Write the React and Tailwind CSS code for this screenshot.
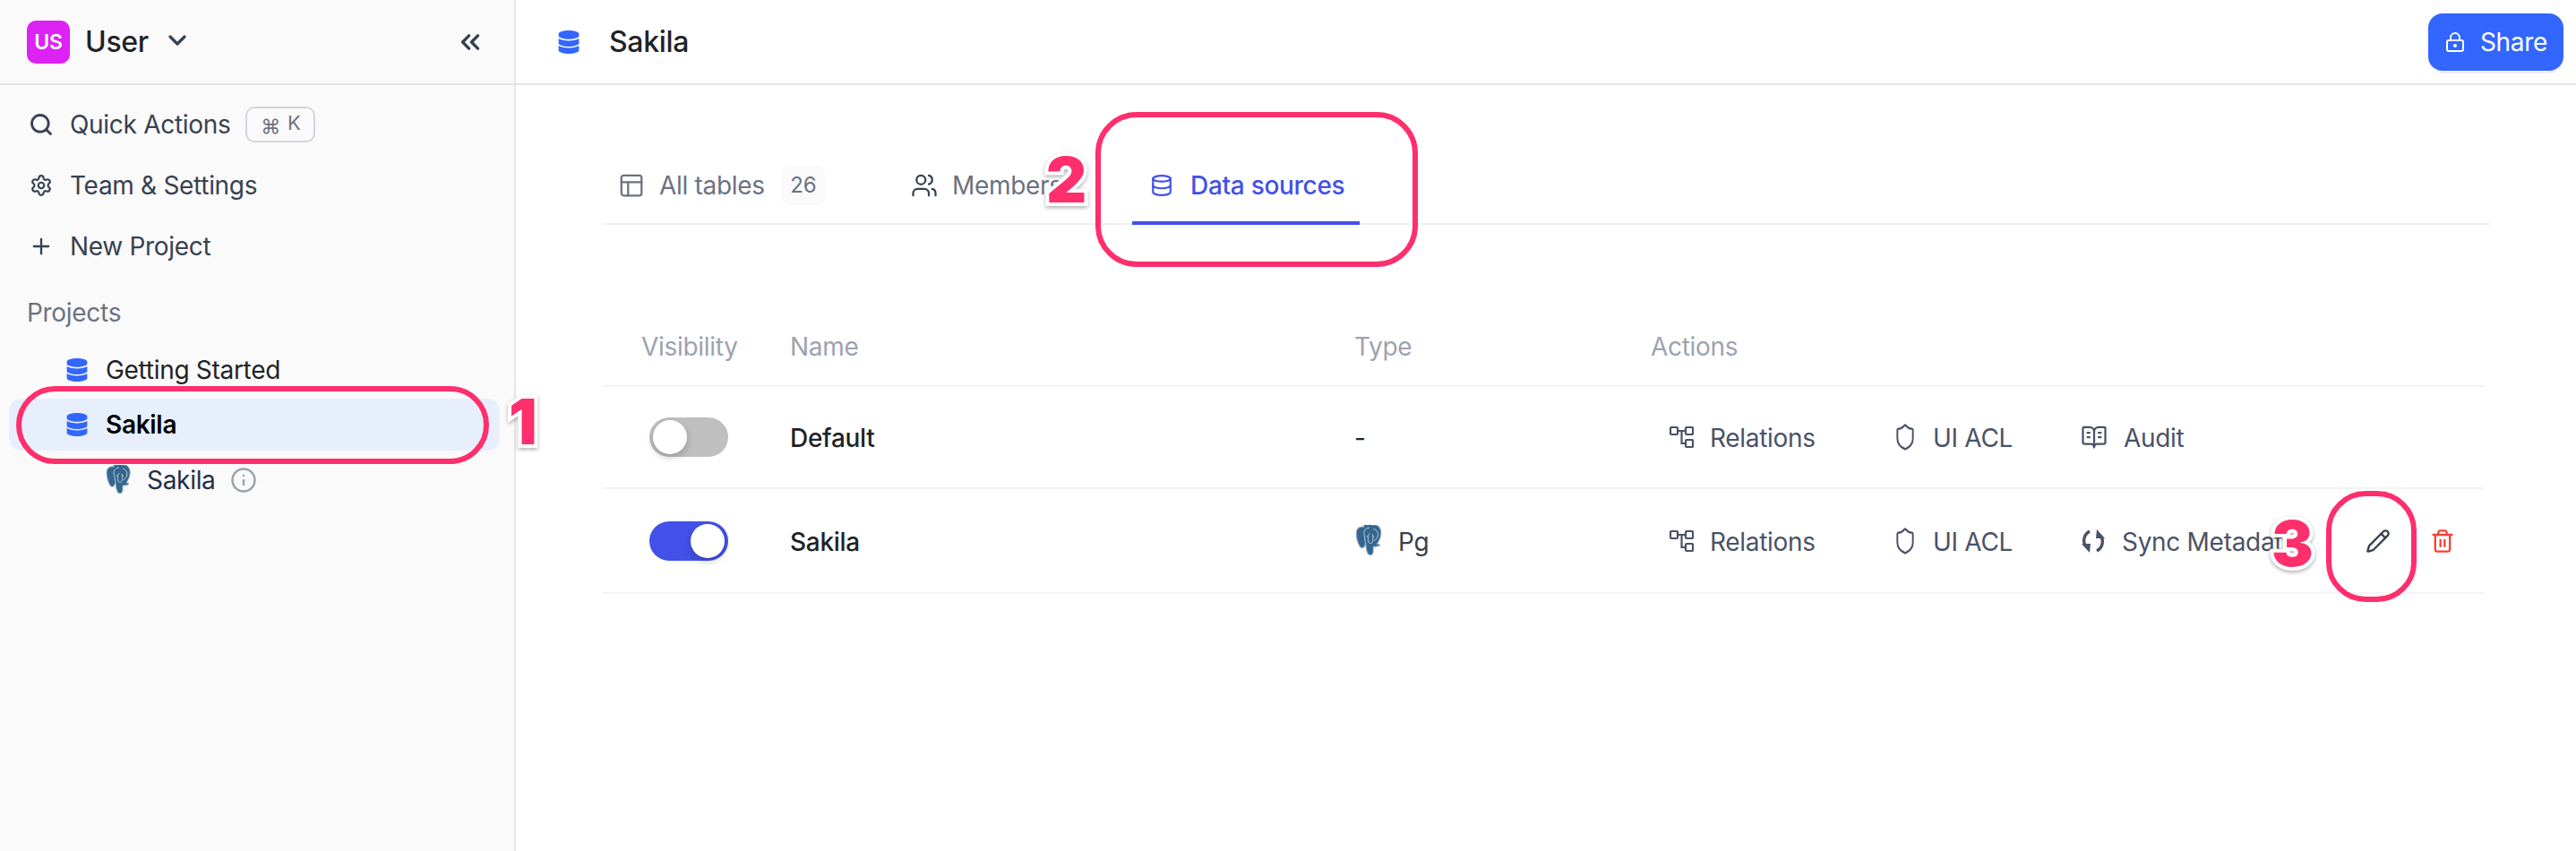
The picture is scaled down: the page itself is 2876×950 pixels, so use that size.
import React from "react";
import {
  Search,
  Settings,
  Plus,
  ChevronDown,
  ChevronsLeft,
  Info,
  PanelsTopLeft,
  Users,
  Database,
  Shield,
  BookOpenText,
  Pencil,
  Trash2,
  LockKeyhole,
} from "lucide-react";
import { FaDatabase } from "react-icons/fa";

const RelationsIcon = () => (
  <svg viewBox="0 0 28 28" className="w-[28px] h-[28px] text-[#4a5268]" fill="none" stroke="currentColor" strokeWidth="2.2">
    <rect x="2" y="3" width="8" height="8" rx="1" />
    <rect x="19" y="3" width="8" height="8" rx="1" />
    <rect x="19" y="17" width="8" height="8" rx="1" />
    <path d="M10 7h9M14.5 7v14H19" />
  </svg>
);

const SyncIcon = () => (
  <svg viewBox="0 0 28 28" className="w-[28px] h-[28px] text-[#4a5268]" fill="none">
    <path d="M10 3C3 7 2 15 6 20" stroke="currentColor" strokeWidth="3.4" />
    <path d="M1 17l10 0-1 10z" fill="currentColor" />
    <path d="M18 25c7-4 8-12 4-17" stroke="currentColor" strokeWidth="3.4" />
    <path d="M27 11l-10 0 1-10z" fill="currentColor" />
  </svg>
);

// postgres elephant, filled body with thin light lines
const PgIcon = ({ className }) => (
  <svg viewBox="0 0 32 34" className={className}>
    <path
      d="M10 2C5 1 2 4 2 9c0 5 2 11 4 14 1 2 4 2 5-1l1-2c0 3 1 8 2 10 2 3 6 2 6-2v-5c2 0 6 0 7-2 0-1-2-1-3-1 2-3 5-8 4-14-1-5-5-7-9-6-2-1-4-1-5 0-2-1-3-1-4 0z"
      fill="#336791"
      stroke="#a9b6c2"
      strokeWidth="1"
    />
    <path
      d="M12 20c-1-4-1-8-2-11 0-3 2-6 6-6M16 9c-2 2-2 6-1 9 1 2 3 2 4 0 1-2 1-6 0-8M20 4c3 1 5 3 5 6 0 3-2 5-4 7M13 12h1M20 12h1"
      fill="none"
      stroke="#c3ced8"
      strokeWidth="0.9"
    />
  </svg>
);

const Toggle = ({ on }) => (
  <div className={`w-[88px] h-[44px] rounded-full flex items-center px-[4px] ${on ? "bg-[#4351e8] justify-end" : "bg-[#bfbfbf] justify-start"}`}>
    <div className="w-[38px] h-[38px] rounded-full bg-white shadow-[0_4px_8px_rgba(0,0,0,0.2)]" />
  </div>
);

const ActionItem = ({ icon, label, width }) => (
  <div className={`flex items-center gap-[18px] shrink-0 ${width}`}>
    {icon}
    <span className="pt-[2px] text-[#4a5268]">{label}</span>
  </div>
);

const ShieldIcon = () => (
  <Shield preserveAspectRatio="none" className="w-[26px] h-[32px] text-[#4a5268]" strokeWidth={1.8} />
);

const Marker = ({ children, className }) => (
  <span className={`absolute font-['Inter',sans-serif] font-black text-[70px] leading-none text-[#ff2e6d] [-webkit-text-stroke:8px_white] [paint-order:stroke_fill] drop-shadow-[0_2px_2px_rgba(0,0,0,0.3)] ${className}`}>
    {children}
  </span>
);

const SideLink = ({ icon, children }) => (
  <div className="h-[68px] flex items-center pl-[32px] gap-[18px] text-[#374151]">
    <span className="w-[28px] flex justify-center">{icon}</span>
    <span>{children}</span>
  </div>
);

export default function App() {
  return (
    <div className="relative w-[2876px] h-[950px] flex bg-white overflow-hidden font-['Inter',sans-serif] text-[28px] leading-[40px] tracking-[-0.3px]">
      {/* sidebar */}
      <aside className="w-[576px] shrink-0 bg-[#fafafa] border-r-2 border-[#e5e5e5] flex flex-col">
        <div className="h-[95px] shrink-0 border-b-2 border-[#e5e5e5] flex items-center pl-[30px] pr-[32px]">
          <div className="w-[48px] h-[48px] rounded-[10px] bg-[#dd22f5] text-white text-[23px] font-semibold flex items-center justify-center">US</div>
          <span className="ml-[17px] text-[32px] font-medium text-[#1f2328]">User</span>
          <ChevronDown className="ml-[16px] -mt-[3px] w-[32px] h-[32px] text-[#374151]" strokeWidth={2.4} />
          <ChevronsLeft className="ml-auto w-[34px] h-[34px] text-[#374151]" strokeWidth={2.4} />
        </div>

        <div className="pt-[10px]">
          <SideLink icon={<Search className="w-[28px] h-[28px]" strokeWidth={2.4} />}>
            <span className="flex items-center gap-[17px]">
              Quick Actions
              <span className="w-[78px] h-[40px] rounded-[10px] border-2 border-[#d4d6dc] flex justify-center gap-[8px] text-[#6b7280] text-[22px] leading-[32px]">
                <span className="pt-[4px]">⌘</span>
                <span>K</span>
              </span>
            </span>
          </SideLink>
          <SideLink icon={<Settings className="w-[26px] h-[26px]" />}>Team &amp; Settings</SideLink>
          <SideLink icon={<Plus className="w-[28px] h-[28px]" />}>New Project</SideLink>
        </div>

        <div className="pl-[30px] pt-[20px] text-[#6b7280]">Projects</div>

        <div className="pt-[15px] pl-[10px] pr-[16px]">
          <div className="h-[58px] flex items-center pl-[64px] gap-[20px] text-[#1f2328]">
            <FaDatabase className="w-[24px] h-[26px] text-[#3366ff]" />
            <span>Getting Started</span>
          </div>
          <div className="mt-[3px] h-[58px] rounded-[14px] bg-[#e8effc] flex items-center pl-[64px] gap-[20px] text-black font-semibold">
            <FaDatabase className="w-[24px] h-[26px] text-[#3366ff]" />
            <span>Sakila</span>
          </div>
          <div className="mt-[13px] h-[40px] flex items-center pl-[107px] text-[#1f2f4a]">
            <PgIcon className="w-[32px] h-[34px]" />
            <span className="ml-[15px]">Sakila</span>
            <Info className="ml-[16px] w-[30px] h-[30px] text-[#9ca3af]" />
          </div>
        </div>
      </aside>

      {/* main */}
      <main className="flex-1 flex flex-col">
        <header className="h-[95px] shrink-0 border-b-2 border-[#e5e5e5] flex items-center pl-[46px] pr-[14px]">
          <FaDatabase className="w-[26px] h-[26px] text-[#3366ff]" />
          <span className="ml-[32px] text-[32px] font-medium text-[#1f2328]">Sakila</span>
          <button className="ml-auto w-[151px] h-[64px] rounded-[16px] bg-[#3366ff] text-white shadow-[0_3px_0_#f0f1f5] flex items-center justify-center gap-[16px]">
            <LockKeyhole className="w-[24px] h-[26px]" strokeWidth={2} />
            Share
          </button>
        </header>

        <div className="pl-[96px] pr-[102px] pt-[70px]">
          {/* tabs */}
          <div className="-mr-[6px] h-[86px] border-b-2 border-[#f0f0f0] flex text-[#6b7280]">
            <div className="flex items-start pt-[22px] pl-[18px] w-[345px]">
              <PanelsTopLeft className="mt-[5px] w-[30px] h-[30px]" strokeWidth={1.8} />
              <span className="ml-[16px]">All tables</span>
              <span className="ml-[18px] -mt-[2px] w-[50px] h-[44px] rounded-[10px] bg-[#fafafa] text-[24px] flex items-center justify-center">26</span>
            </div>
            <div className="flex items-start pt-[22px] w-[247px]">
              <Users className="mt-[5px] w-[30px] h-[30px] text-[#374151]" strokeWidth={1.8} />
              <span className="ml-[16px]">Members</span>
            </div>
            <div className="h-[86px] w-[254px] border-b-4 border-[#4351e8] flex items-start pt-[22px] pl-[20px] text-[#4351e8] font-medium">
              <Database className="mt-[6px] w-[26px] h-[28px]" strokeWidth={2} />
              <span className="ml-[19px]">Data sources</span>
            </div>
          </div>

          {/* table */}
          <div className="mt-[116px] text-[#1f2328]">
            <div className="h-[65px] grid grid-cols-[210px_630px_331px_1fr] items-start border-b-2 border-[#f4f4f5] text-[#9ca3af]">
              <span className="pl-[44px]">Visibility</span>
              <span>Name</span>
              <span>Type</span>
              <span>Actions</span>
            </div>

            <div className="h-[114px] grid grid-cols-[210px_630px_331px_1fr] items-center border-b-2 border-[#f4f4f5]">
              <div className="pl-[53px]"><Toggle /></div>
              <span className="pt-[2px] font-medium">Default</span>
              <span className="pt-[2px]">-</span>
              <div className="flex items-center pl-[20px]">
                <ActionItem icon={<RelationsIcon />} label="Relations" width="w-[251px]" />
                <ActionItem icon={<ShieldIcon />} label="UI ACL" width="w-[209px]" />
                <ActionItem icon={<BookOpenText className="w-[30px] h-[30px] text-[#4a5268]" strokeWidth={1.8} />} label="Audit" width="w-[200px]" />
              </div>
            </div>

            <div className="h-[117px] grid grid-cols-[210px_630px_331px_1fr] items-center border-b-2 border-[#f4f4f5]">
              <div className="pl-[53px]"><Toggle on /></div>
              <span className="pt-[2px] font-medium">Sakila</span>
              <span className="flex items-center gap-[15px] text-[#374151]">
                <PgIcon className="w-[34px] h-[36px]" />
                <span className="pt-[2px]">Pg</span>
              </span>
              <div className="flex items-center pl-[20px]">
                <ActionItem icon={<RelationsIcon />} label="Relations" width="w-[251px]" />
                <ActionItem icon={<ShieldIcon />} label="UI ACL" width="w-[209px]" />
                <ActionItem icon={<SyncIcon />} label="Sync Metadata" width="w-[318px]" />
                <Pencil className="w-[28px] h-[28px] text-[#374151]" strokeWidth={2} />
                <Trash2 className="ml-[44px] w-[28px] h-[30px] text-[#f44336]" strokeWidth={2} />
              </div>
            </div>
          </div>
        </div>
      </main>

      {/* annotations drawn over the screenshot */}
      <div className="absolute left-[18px] top-[431px] w-[528px] h-[87px] rounded-full border-[6px] border-[#ff2e6d]" />
      <Marker className="left-[568px] top-[436px]">1</Marker>
      <div className="absolute left-[1223px] top-[125px] w-[360px] h-[173px] rounded-[46px] border-[6px] border-[#ff2e6d]" />
      <Marker className="left-[1168px] top-[166px]">2</Marker>
      <div className="absolute left-[2597px] top-[548px] w-[101px] h-[124px] rounded-[44px] border-[6px] border-[#ff2e6d]" />
      <Marker className="left-[2536px] top-[572px]">3</Marker>
    </div>
  );
}
